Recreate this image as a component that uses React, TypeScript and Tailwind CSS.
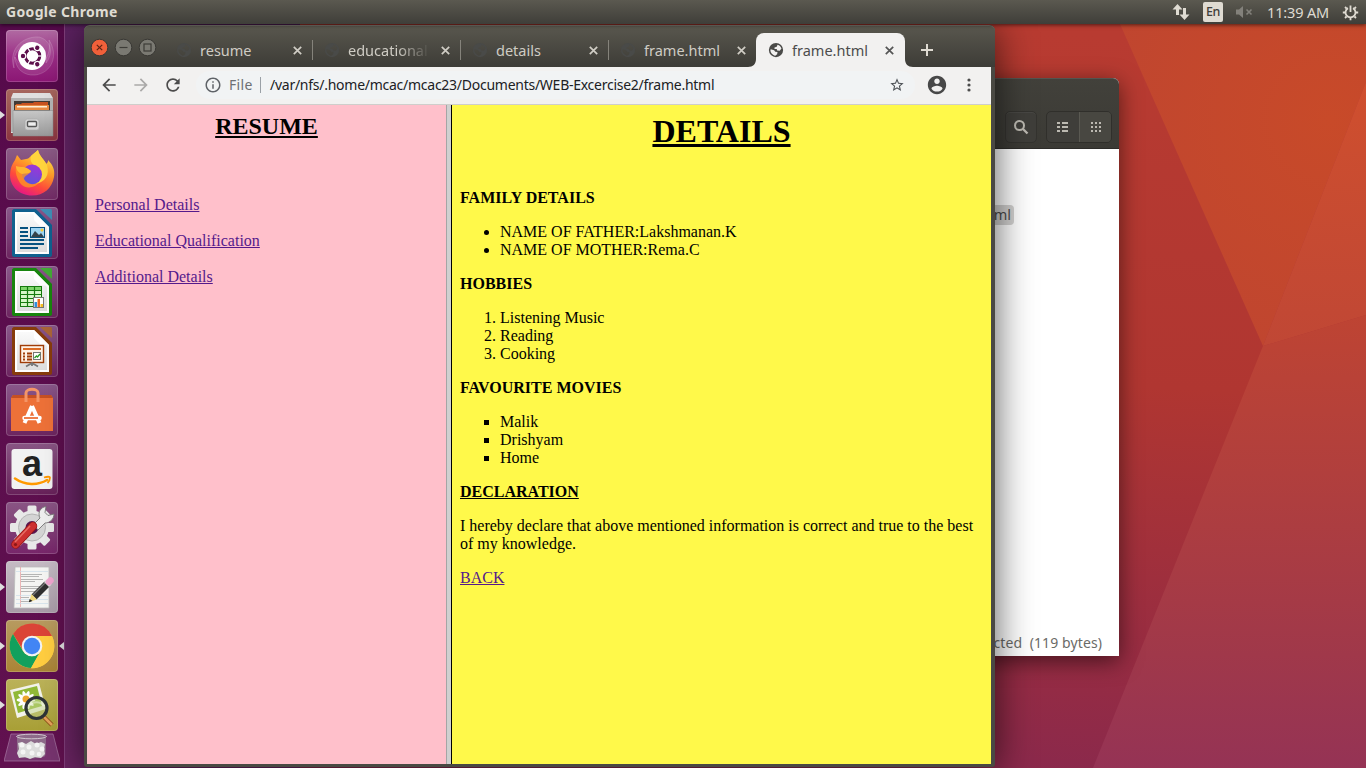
import React from "react";

const UI = "font-['Noto_Sans','Open_Sans',sans-serif]";

function Wallpaper() {
  return (
    <svg className="absolute inset-0" width="1366" height="768" viewBox="0 0 1366 768">
      <defs>
        <linearGradient id="wBase" x1="0.35" y1="0" x2="0.25" y2="1">
          <stop offset="0" stopColor="#b83b31" />
          <stop offset="0.45" stopColor="#b03631" />
          <stop offset="0.8" stopColor="#972c42" />
          <stop offset="1" stopColor="#87284f" />
        </linearGradient>
        <linearGradient id="wLeft" x1="0" y1="0" x2="0" y2="1">
          <stop offset="0" stopColor="#5b2160" />
          <stop offset="0.4" stopColor="#6c2769" />
          <stop offset="1" stopColor="#6a2462" />
        </linearGradient>
        <radialGradient id="wTop" cx="1330" cy="120" r="260" gradientUnits="userSpaceOnUse">
          <stop offset="0" stopColor="#c84a29" />
          <stop offset="1" stopColor="#bf4530" />
        </radialGradient>
        <linearGradient id="wRight" x1="0" y1="0" x2="0" y2="1">
          <stop offset="0" stopColor="#cf4f2e" />
          <stop offset="1" stopColor="#c04735" />
        </linearGradient>
        <linearGradient id="wLow" x1="0" y1="315" x2="0" y2="768" gradientUnits="userSpaceOnUse">
          <stop offset="0" stopColor="#be4433" />
          <stop offset="0.35" stopColor="#b13f3d" />
          <stop offset="0.75" stopColor="#a0384a" />
          <stop offset="1" stopColor="#953355" />
        </linearGradient>
      </defs>
      <rect width="1366" height="768" fill="url(#wBase)" />
      <rect width="300" height="768" fill="url(#wLeft)" />
      <polygon points="1120,24 1366,24 1366,82 1263,346" fill="url(#wTop)" />
      <polygon points="1366,82 1366,315 1263,346" fill="url(#wRight)" />
      <polygon points="1263,346 1366,315 1366,768 1093,768" fill="url(#wLow)" />
    </svg>
  );
}

function TopPanel() {
  return (
    <header className={`relative z-30 flex h-6 w-full items-center justify-between bg-linear-to-b from-[#5b5950] to-[#3f3e39] pr-[7px] pl-1.5 text-[#dfdbd2] shadow-[0_1px_4px_rgba(0,0,0,0.6)] ${UI}`}>
      <span className="text-[14px] leading-6 font-bold tracking-[0.33px] whitespace-nowrap">Google Chrome</span>
      <div className="flex items-center">
        <svg width="18" height="16" viewBox="0 0 18 16" fill="#dfdbd2">
          <path d="M5.500 0 10.500 5.500H7V11H4V5.500H.5zM12.500 16 7.500 10.500H11V4h3v6.500h3.500z" />
        </svg>
        <span className="ml-[13px] flex h-5 w-5 items-center justify-center rounded-[2px] bg-[#dfdbd2] text-[12.5px] leading-5 font-medium tracking-[-0.5px] text-[#3f3e39]">En</span>
        <svg className="ml-3" width="18" height="14" viewBox="0 0 18 14">
          <path d="M1 4.500h3L8 1v12L4 9.500H1z" fill="#83817b" />
          <path d="m11.500 4.500 5 5m0-5-5 5" stroke="#83817b" strokeWidth="1.600" />
        </svg>
        <span className="ml-3.5 w-[75px] text-[14.5px] leading-6 tracking-[-0.15px] whitespace-nowrap">11:39 AM</span>
        <svg width="17" height="17" viewBox="0 0 17 17" fill="none" stroke="#dfdbd2">
          <path d="M6 4.100a5 5 0 1 0 5 0" strokeWidth="1.800" />
          <path d="M8.500 1.500v6.500" strokeWidth="1.800" />
          <path d="M3 3l1.700 1.700M14 3l-1.700 1.700M.8 8.500H3M14 8.500h2.200M3 14l1.500-1.500M14 14l-1.500-1.500M8.500 14v2.200" strokeWidth="1.800" />
        </svg>
      </div>
    </header>
  );
}

function UbuntuIcon() {
  return (
    <g>
      <g fill="#fff" fillOpacity="0.1" stroke="#fff" strokeOpacity="0.2" strokeWidth="0.800">
        <path d="M8 38C2 20 16 6 33 7c12 3 15 16 7 26 2-14-8-22-19-19C10 17 7 28 8 38z" />
        <path d="M43 10c10 15 3 33-14 35-12 1-20-7-20-18 5 10 14 14 23 9s13-15 11-26z" />
      </g>
      <circle cx="26" cy="26" r="14" fill="#fff" />
      <circle cx="26.500" cy="26" r="7.300" fill="none" stroke="#5d0f4c" strokeWidth="3" />
      {[0, 120, 240].map((a) => (
        <path key={a} d="M31 26h6" stroke="#fff" strokeWidth="1.200" transform={`rotate(${a} 26.500 26)`} />
      ))}
      {[180, 60, -60].map((a) => (
        <g key={a} transform={`rotate(${a} 26.500 26)`}>
          <circle cx="36" cy="26" r="2.800" fill="#5d0f4c" stroke="#fff" strokeWidth="1.200" />
        </g>
      ))}
    </g>
  );
}

function FilesIcon() {
  return (
    <g>
      <path d="M7 4h37l3 5v35H5V9z" fill="#e0e0e0" />
      <path d="M5 9h42v34H5z" fill="#b4b4b4" />
      <path d="M8 12h36v10H8z" fill="#423a35" />
      <path d="M10 15h5l1-1h11l1-1h14v3H10z" fill="#c85220" />
      <path d="M9 16h34v5H9z" fill="#e98b43" />
      <path d="M11 17h30v1.500H11z" fill="#fff0d8" />
      <path d="M7 21.500h40V47H7z" fill="url(#grey)" stroke="#888" strokeWidth="0.500" />
      <rect x="19" y="30" width="14" height="11" rx="2.500" fill="#d2d2d2" stroke="#aaa" strokeWidth="0.600" />
      <rect x="21.500" y="32.500" width="9" height="5" rx="1" fill="#eee" stroke="#555" strokeWidth="1.400" />
    </g>
  );
}

function FirefoxIcon() {
  return (
    <g>
      <path d="M25 8c2-2 5-4 7-6 1 6 6 9 8 14 2-1 2-3 2-4 5 5 7 10 6 17-2 11-10 18.500-22 18.500C13 47.500 4 38 4 27c0-6 2-11 5-15l2-5c2 2 3 4 4 5l5-1c2 0 3-1 5-3z" fill="url(#fox)" />
      <path d="M25 8c2-2 5-4 7-6 1 6 7 10 9 15 3 10-2 17-11 19 8-9 3-16-1-18-4-3-5-6-4-10z" fill="#ffd43d" />
      <circle cx="26" cy="26.500" r="10" fill="url(#foxIn)" />
      <path d="M10 19c5 2 8-1 15 4 0 3-7 4-7 8 3 5 9 7 15 3-3 6-14 8-19 1-3-5-5-10-4-16z" fill="#ff9a20" fillOpacity="0.750" />
      <path d="M10 18c5 2 9-1 15 5-1 3-5 2-9 3-3-1-6-4-6-8z" fill="#ffb630" />
    </g>
  );
}

function DocBase({ color, fold }: { color: string; fold: string }) {
  return (
    <g>
      <path d="M8 2h22l16 16v30c0 1-1 2-2 2H8c-1 0-2-1-2-2V4c0-1 1-2 2-2z" fill={color} />
      <path d="M34 2h10c1.500 0 2 .5 2 2v9z" fill={fold} />
      <path d="M9 5h19l15 15v27H9z" fill="#fff" />
      <path d="M11 7h16l14 14v24H11z" fill="url(#paper)" />
      <path d="M28 5v8l6 6 9 1z" fill="#fff" />
    </g>
  );
}

function WriterIcon() {
  return (
    <g>
      <DocBase color="#10618f" fold="#408eb5" />
      <path d="M14 21h8M14 25h8M14 29h8M14 33h24M14 37h24M14 41h18" stroke="#075280" strokeWidth="2" />
      <rect x="24.500" y="20.500" width="14" height="10" fill="#9fd5f3" stroke="#075280" />
      <path d="m25 30 4-6 4 4 2-2 3 4z" fill="#35424b" />
      <circle cx="36" cy="23" r="1.500" fill="#f8c934" />
    </g>
  );
}

function CalcIcon() {
  return (
    <g>
      <DocBase color="#18850e" fold="#43aa36" />
      <rect x="14.500" y="20.500" width="21" height="20" fill="#d7f7c8" stroke="#167a0e" />
      <path d="M15 21h20v3H15z" fill="#7fd66b" />
      <path d="M14 24.500h22M14 28.500h22M14 32.500h22M14 36.500h22M21.500 20v21M28.500 20v21" stroke="#167a0e" strokeWidth="1.200" />
      <rect x="27.500" y="31.500" width="10" height="10" fill="#fff" stroke="#777" />
      <path d="M28.500 36h2.500v5h-2.500z" fill="#2f8fdd" />
      <path d="M31.500 33H34v8h-2.500z" fill="#f06a1c" />
      <path d="M34.500 38H37v3h-2.500z" fill="#f5bd23" />
    </g>
  );
}

function ImpressIcon() {
  return (
    <g>
      <DocBase color="#873c0c" fold="#aa6538" />
      <rect x="14.500" y="20.500" width="23" height="17" fill="#fff2e5" stroke="#a03d08" strokeWidth="1.400" />
      <path d="M17 24h18" stroke="#db6b25" strokeWidth="2" />
      <path d="M17 28.500h2M17 31.500h2M17 34.500h2M21 28.500h5M21 31.500h5M21 34.500h5" stroke="#a03d08" strokeWidth="1.800" />
      <rect x="27.500" y="27.500" width="7" height="7" fill="#fff" stroke="#777" />
      <path d="m28.500 33 2-2 1 1 2.500-3" stroke="#2b9a27" fill="none" strokeWidth="1.300" />
      <path d="M20 41.500 26 38l6 3.500M26 38v3" stroke="#777" strokeWidth="1.800" fill="none" />
    </g>
  );
}

function SoftwareIcon() {
  return (
    <g>
      <path d="m7 11-2 3v33h42V14l-2-3z" fill="#ed7138" />
      <path d="m7 11-2 3h42l-2-3z" fill="#c65023" />
      <path d="M20 18V9c0-5 12-5 12 0v9" fill="none" stroke="#f49567" strokeWidth="3" />
      <path d="M26 22 18.500 39M26 22l7.500 17" stroke="#fff" strokeWidth="4" fill="none" />
      <path d="M18.500 34h15" stroke="#fff" strokeWidth="4.500" strokeLinecap="round" />
      <path d="M18 34h14" stroke="#ed7138" strokeWidth="1.800" />
    </g>
  );
}

function AmazonIcon() {
  return (
    <g>
      <rect x="5.500" y="6" width="41" height="40" rx="3" fill="#f2f2f2" />
      <text x="26" y="33" textAnchor="middle" fontFamily="Liberation Sans" fontWeight="700" fontSize="36" fill="#222">a</text>
      <path d="M9 35.500c10 7 23 7 32 1.500" fill="none" stroke="#ff9900" strokeWidth="2.600" strokeLinecap="round" />
      <path d="M38 34.500c3-1 6-1 6 0s-1 4-2.500 5.500" fill="none" stroke="#ff9900" strokeWidth="1.800" />
    </g>
  );
}

function SettingsIcon() {
  return (
    <g>
      <g fill="#e8e8e8">
        {[0, 45, 90, 135].map((a) => (
          <rect key={a} x="21.500" y="3.500" width="9" height="44" rx="1.500" transform={`rotate(${a} 26 25.500)`} />
        ))}
        <circle cx="26" cy="25.500" r="17" />
      </g>
      <circle cx="26" cy="25.500" r="13.500" fill="#d4d4d4" stroke="#b5b5b5" />
      <circle cx="26" cy="25.500" r="6.500" fill="#591650" />
      <path d="M27.500 22.500 34 16c-2-4-1-9 4-11l2-.5-1 6 3 3 6-1.500c0 5-4 9-9 9l-7 7z" fill="#eee" stroke="#777" strokeWidth="0.900" strokeLinejoin="round" />
      <path d="M9.500 42.500 27 24" stroke="#951515" strokeWidth="8.500" strokeLinecap="round" />
      <path d="M9.500 42.500 27 24" stroke="#cd3030" strokeWidth="7" strokeLinecap="round" />
      <path d="M9 40 24 24" stroke="#e76d65" strokeWidth="1.500" />
      <circle cx="9.500" cy="42.500" r="1.600" fill="#8c1717" />
    </g>
  );
}

function EditorIcon() {
  return (
    <g>
      <path d="M9 6h34v41H8z" fill="#f5f5f3" stroke="#bbb" strokeWidth="0.800" />
      <path d="M14.500 6v40" stroke="#e9a4a4" strokeWidth="0.800" />
      <path d="M10 10.500h32M10 34.500h32M10 38.500h32M10 42.500h32" stroke="#ccdce8" strokeWidth="0.700" />
      <path d="M15 13.500h21M15 15.500h18M15 18.500h22M15 20.500h14M15 25.500h20M15 27.500h18M15 30.500h16M15 36.500h8M15 40.500h10" stroke="#8a8a8a" strokeWidth="0.600" />
      <path d="m28 36 13-13" stroke="#303030" strokeWidth="7" />
      <path d="m27 34 13-13" stroke="#777" strokeWidth="1.300" />
      <path d="m40.500 23.500 2.500-2.500" stroke="#ddd" strokeWidth="7" />
      <path d="m43 21 1.500-1.500" stroke="#f1a5cf" strokeWidth="6.500" strokeLinecap="round" />
      <path d="m25.500 33-2.500 8 8-2.500z" fill="#eed77d" />
      <path d="m23.700 38-.8 3.300 3.600-1.300z" fill="#222" />
    </g>
  );
}

function ChromeIcon() {
  return (
    <g>
      <circle cx="26" cy="26" r="22.300" fill="#ffcd40" />
      <path d="M26 16h20A22.300 22.300 0 0 0 7 14l10.500 17z" fill="#db4437" />
      <path d="M7 14a22.300 22.300 0 0 0 18 34l9.500-17a10 10 0 0 1-17.500 0z" fill="#12a05d" />
      <path d="M26 16h20A22.300 22.300 0 0 1 25 48.200l9.600-17A10 10 0 0 0 26 16z" fill="#ffcd40" />
      <circle cx="26" cy="26" r="10.300" fill="#f3f3f3" />
      <circle cx="26" cy="26" r="8.200" fill="#4285f4" />
    </g>
  );
}

function ViewerIcon() {
  return (
    <g>
      <path d="m4 11 29-7 7 26-29 9z" fill="#f2f2eb" />
      <path d="m7 13 24-6 5 20-24 7z" fill="#90b936" />
      <g fill="#fff">
        {[0, 36, 72, 108, 144].map((a) => (
          <ellipse key={a} cx="20" cy="21" rx="9.500" ry="2.300" transform={`rotate(${a} 20 21)`} />
        ))}
      </g>
      <circle cx="20" cy="20" r="3.500" fill="#eda62c" />
      <path d="m38 38 8 8" stroke="#8c4e17" strokeWidth="4.500" />
      <path d="m38 38 8 8" stroke="#e3a259" strokeWidth="2.700" />
      <circle cx="30.500" cy="29" r="10.500" fill="#c4d690" fillOpacity="0.500" stroke="#2e3436" strokeWidth="3.200" />
      <path d="M23 27c4-5 11-5 15 0" stroke="#fff" strokeOpacity="0.400" fill="none" strokeWidth="2" />
    </g>
  );
}

type Item = { id: string; icon: React.ReactNode; tile: string; left?: boolean; right?: boolean };

const ITEMS: Item[] = [
  { id: "dash", icon: <UbuntuIcon />, tile: "bg-linear-to-b from-[#b06aa2] via-[#9c2d87] to-[#8b1674]" },
  { id: "files", icon: <FilesIcon />, tile: "bg-linear-to-b from-[#a6675e] to-[#8b3440]", left: true },
  { id: "firefox", icon: <FirefoxIcon />, tile: "bg-linear-to-b from-[#8b5c86] to-[#732b66]" },
  { id: "writer", icon: <WriterIcon />, tile: "bg-linear-to-b from-[#89588a] to-[#6c245f]" },
  { id: "calc", icon: <CalcIcon />, tile: "bg-linear-to-b from-[#89588a] to-[#6c245f]" },
  { id: "impress", icon: <ImpressIcon />, tile: "bg-linear-to-b from-[#89588a] to-[#6c245f]" },
  { id: "software", icon: <SoftwareIcon />, tile: "bg-linear-to-b from-[#89588a] to-[#6c245f]" },
  { id: "amazon", icon: <AmazonIcon />, tile: "bg-linear-to-b from-[#895584] to-[#672059]" },
  { id: "settings", icon: <SettingsIcon />, tile: "bg-linear-to-b from-[#895584] to-[#77256a]" },
  { id: "editor", icon: <EditorIcon />, tile: "bg-linear-to-b from-[#c5bbc4] to-[#a89ba7]", left: true },
  { id: "chrome", icon: <ChromeIcon />, tile: "bg-linear-to-b from-[#b79a60] to-[#aa8435]", left: true, right: true },
  { id: "viewer", icon: <ViewerIcon />, tile: "bg-linear-to-b from-[#bbb259] to-[#a89f35]", left: true },
];

function Launcher() {
  return (
    <nav className="relative flex h-[744px] w-[65px] shrink-0 flex-col gap-[7px] border-r border-[#803f7b] bg-linear-to-b from-[#560a4b] to-[#61114f] pt-1.5">
      <svg className="absolute" width="0" height="0">
        <defs>
          <linearGradient id="grey" x1="0" y1="0" x2="0" y2="1">
            <stop offset="0" stopColor="#c7c7c7" />
            <stop offset="1" stopColor="#999" />
          </linearGradient>
          <linearGradient id="paper" x1="0" y1="0" x2="0" y2="1">
            <stop offset="0" stopColor="#fafafa" />
            <stop offset="1" stopColor="#dedede" />
          </linearGradient>
          <linearGradient id="fox" x1="0.800" y1="0" x2="0.300" y2="1">
            <stop offset="0" stopColor="#fff44f" />
            <stop offset="0.400" stopColor="#ff9b28" />
            <stop offset="0.700" stopColor="#ff4b3b" />
            <stop offset="1" stopColor="#e31587" />
          </linearGradient>
          <linearGradient id="foxIn" x1="0.700" y1="0" x2="0.300" y2="1">
            <stop offset="0" stopColor="#a034d8" />
            <stop offset="1" stopColor="#5a55d8" />
          </linearGradient>
        </defs>
      </svg>
      {ITEMS.map((it) => (
        <div key={it.id} className="flex h-[52px] w-16 shrink-0 items-center">
          <svg className="mr-px shrink-0" width="5" height="8" viewBox="0 0 5 8">
            {it.left && <path d="M0 0 5 4 0 8z" fill="#dedede" />}
          </svg>
          <div className={`h-[52px] w-[52px] shrink-0 rounded-[4px] shadow-[inset_0_0_0_1px_rgba(255,255,255,0.18)] ${it.tile}`}>
            <svg className="overflow-visible" width="52" height="52" viewBox="0 0 52 52">{it.icon}</svg>
          </div>
          <svg className="ml-px shrink-0" width="5" height="8" viewBox="0 0 5 8">
            {it.right && <path d="M5 0 0 4 5 8z" fill="#dedede" />}
          </svg>
        </div>
      ))}
      <svg className="-mt-[6px] ml-1 shrink-0" width="56" height="31" viewBox="0 0 56 31">
        <path d="M7 2h42l7 27H0z" fill="#7d3d77" fillOpacity="0.800" stroke="#a878a4" strokeWidth="0.700" />
        <path d="M13 6c0 9 0 15 1 18 3 3 24 3 27 0 1-3 1-9 1-18z" fill="#8d6b8a" />
        <path d="m14 11 4-1 4 2 5-3 5 3 5-2 4 2-1 5 1 5-4 4-6-1-5 2-5-2-6 1-2-5 2-4z" fill="#dcdcdc" />
        <g fill="#f4f4f4">
          <circle cx="18" cy="13" r="2.500" /><circle cx="25" cy="15" r="2.500" /><circle cx="33" cy="13" r="2.500" />
          <circle cx="38" cy="17" r="2.500" /><circle cx="19" cy="20" r="2.500" /><circle cx="28" cy="21" r="2.500" /><circle cx="35" cy="22" r="2.200" />
        </g>
        <ellipse cx="27.500" cy="4.500" rx="15" ry="2.300" fill="#8d6b8a" stroke="#d0c6cf" />
      </svg>
    </nav>
  );
}

function FileManager() {
  return (
    <section className={`absolute top-[78px] left-[940px] z-10 flex h-[578px] w-[179px] flex-col rounded-t-[6px] bg-white shadow-[0_5px_22px_rgba(0,0,0,0.55)] ${UI}`}>
      <div className="flex h-[71px] items-end justify-end gap-[9px] rounded-t-[6px] border-b border-[#2d2c29] bg-linear-to-b from-[#42413b] to-[#3b3a35] pr-[7px] pb-[5px] shadow-[inset_0_1px_0_rgba(255,255,255,0.1)]">
        <div className="flex h-8 w-8 items-center justify-center rounded-[5px] border border-[#34332f] bg-[#3f3e3a] shadow-[inset_0_1px_0_rgba(255,255,255,0.05)]">
          <svg width="16" height="16" viewBox="0 0 16 16" fill="none" stroke="#bcb9b1">
            <circle cx="6.500" cy="6.500" r="4.500" strokeWidth="2" />
            <path d="m10 10 4.500 4.500" strokeWidth="2.300" />
          </svg>
        </div>
        <div className="flex h-8 w-[66px] overflow-hidden rounded-[5px] border border-[#302f2b] bg-[#3f3e3a]">
          <div className="flex w-8 items-center justify-center">
            <svg width="12" height="10" viewBox="0 0 12 10" fill="#bcb9b1">
              <path d="M0 0h3v2H0zM5 0h6v2H5zM0 4h3v2H0zM5 4h6v2H5zM0 8h3v2H0zM5 8h6v2H5z" />
            </svg>
          </div>
          <div className="flex flex-1 items-center justify-center border-l border-[#5a5952] bg-[#484741]">
            <svg width="10" height="10" viewBox="0 0 10 10" fill="#bcb9b1">
              <path d="M0 0h2v2H0zM4 0h2v2H4zM8 0h2v2H8zM0 4h2v2H0zM4 4h2v2H4zM8 4h2v2H8zM0 8h2v2H0zM4 8h2v2H4zM8 8h2v2H8z" />
            </svg>
          </div>
        </div>
      </div>
      <div className="flex flex-1 flex-col items-end justify-between pt-14">
        <span className="mr-[105px] flex h-5 w-10 items-center justify-end rounded-[4px] bg-[#d3d2d1] pr-[3px] pb-0.5 text-[14.5px] leading-[18px] text-[#4c4c4c]">ml</span>
        <span className="mr-[17px] mb-[3px] text-[14px] leading-5 tracking-[0.1px] whitespace-pre text-[#6b6b68]">cted  (119 bytes)</span>
      </div>
    </section>
  );
}

function Globe({ color }: { color: string }) {
  return (
    <svg width="18" height="18" viewBox="0 0 24 24" fill={color}>
      <path d="M12 2.500A9.500 9.500 0 1 0 12 21.500 9.500 9.500 0 0 0 12 2.500zM5 11l4.500 1.200 1.500 2 3 .3-.5 3-2.500 2-.5 0c-3.500-.8-6-4-6-7.500zM14 5c2.500.7 4.500 2.500 5.300 5L17 13l-3.500-.5-.5-2-3 0 0-2 3-.8z" fillRule="evenodd" />
    </svg>
  );
}

function CloseX({ color }: { color: string }) {
  return (
    <svg width="9" height="9" viewBox="0 0 9 9" stroke={color} strokeWidth="1.700">
      <path d="m.8.8 7.400 7.400M8.200.8.8 8.200" />
    </svg>
  );
}

function Tab({ title, active, fade, line }: { title: string; active?: boolean; fade?: boolean; line?: boolean }) {
  return (
    <div className={`relative flex h-[34px] shrink-0 items-center ${active ? "-ml-px w-[149px] rounded-t-[8px] bg-[#f2f1f0] pl-[11px] text-[#4c4c4c]" : "w-[148px] pl-2.5 text-[#cfccc4]"}`}>
      {active && (
        <>
          <svg className="absolute bottom-0 -left-2" width="8" height="8" viewBox="0 0 8 8"><path d="M8 0v8H0c5 0 8-3 8-8z" fill="#f2f1f0" /></svg>
          <svg className="absolute -right-2 bottom-0" width="8" height="8" viewBox="0 0 8 8"><path d="M0 0v8h8C3 8 0 5 0 0z" fill="#f2f1f0" /></svg>
        </>
      )}
      <Globe color={active ? "#4a4a48" : "#494a48"} />
      <span className={`ml-[7px] w-[82px] overflow-hidden pb-px text-[14.5px] leading-5 whitespace-nowrap ${fade ? "mask-r-from-60%" : ""}`}>{title}</span>
      <span className="ml-[10.5px] flex"><CloseX color={active ? "#555" : "#d0cdc5"} /></span>
      {line && <span className="ml-auto h-5 w-px bg-[#85837b]" />}
    </div>
  );
}

function TitleStrip() {
  return (
    <div className="flex h-[42px] items-end rounded-t-[6px] border-t border-[#76746b] bg-linear-to-b from-[#59574e] to-[#3d3c37] pl-[3px]">
      <div className="flex h-[29px] w-[81px] shrink-0 items-start gap-[5px] pl-[2.5px]">
        <svg width="19" height="19" viewBox="0 0 19 19">
          <circle cx="9.500" cy="9.500" r="8.300" fill="#f0603a" stroke="#393834" strokeWidth="1" />
          <path d="m6.800 6.800 5.400 5.400m0-5.400-5.400 5.400" stroke="#5c2414" strokeWidth="1.200" />
        </svg>
        <svg width="19" height="19" viewBox="0 0 19 19">
          <circle cx="9.500" cy="9.500" r="8.300" fill="#7a7972" stroke="#393834" strokeWidth="1" />
          <path d="M5.500 9.500h8" stroke="#3d3c38" strokeWidth="1.200" />
        </svg>
        <svg width="19" height="19" viewBox="0 0 19 19">
          <circle cx="9.500" cy="9.500" r="8.300" fill="#7a7972" stroke="#393834" strokeWidth="1" />
          <rect x="6" y="6" width="7" height="7" fill="none" stroke="#3d3c38" strokeWidth="1.200" />
        </svg>
      </div>
      <div className="-ml-[3px] flex items-end">
        <Tab title="resume" line />
        <Tab title="educational" fade line />
        <Tab title="details" line />
        <Tab title="frame.html" />
        <Tab title="frame.html" active />
      </div>
      <svg className="mb-[11px] ml-4" width="12" height="12" viewBox="0 0 12 12" stroke="#dfdbd2" strokeWidth="2">
        <path d="M6 0v12M0 6h12" />
      </svg>
    </div>
  );
}

function Toolbar() {
  return (
    <div className="flex h-[38px] items-center border-b border-[#cfcecb] bg-[#f2f1f0] pb-px">
      <div className="flex w-[109px] items-center gap-3 pl-3">
        <svg width="20" height="20" viewBox="0 0 24 24" fill="#4c4c4c"><path d="M20 11H7.830l5.590-5.590L12 4l-8 8 8 8 1.410-1.410L7.830 13H20v-2z" /></svg>
        <svg width="20" height="20" viewBox="0 0 24 24" fill="#aaa9a8"><path d="m12 4-1.410 1.410L16.170 11H4v2h12.170l-5.580 5.590L12 20l8-8z" /></svg>
        <svg width="20" height="20" viewBox="0 0 24 24" fill="#4c4c4c"><path d="M17.650 6.350C16.200 4.900 14.210 4 12 4c-4.420 0-7.990 3.580-7.990 8s3.570 8 7.990 8c3.730 0 6.840-2.550 7.730-6h-2.080c-.82 2.330-3.040 4-5.650 4-3.310 0-6-2.690-6-6s2.690-6 6-6c1.660 0 3.140.69 4.220 1.780L13 11h7V4l-2.350 2.350z" /></svg>
      </div>
      <div className="flex h-7 w-[719px] items-center rounded-full bg-[#f1f3f4] pl-2">
        <svg width="18" height="18" viewBox="0 0 24 24" fill="#5f6368"><path d="M11 7h2v2h-2zm0 4h2v6h-2zm1-9C6.480 2 2 6.480 2 12s4.480 10 10 10 10-4.480 10-10S17.520 2 12 2zm0 18c-4.410 0-8-3.590-8-8s3.590-8 8-8 8 3.590 8 8-3.590 8-8 8z" /></svg>
        <span className="ml-[7px] w-[31px] text-[14px] leading-5 tracking-[0.3px] text-[#6d7073]">File</span>
        <span className="h-4 w-px bg-[#9aa0a6]" />
        <span className="ml-[9px] flex-1 text-[14px] leading-5 tracking-[-0.26px] whitespace-nowrap text-[#202124]">/var/nfs/.home/mcac/mcac23/Documents/WEB-Excercise2/frame.html</span>
        <svg className="mr-[10px]" width="16" height="16" viewBox="0 0 24 24" fill="#4c5055"><path d="m22 9.240-7.190-.62L12 2 9.190 8.630 2 9.240l5.460 4.730L5.820 21 12 17.270 18.180 21l-1.630-7.030L22 9.240zM12 15.400l-3.760 2.270 1-4.280-3.320-2.880 4.380-.38L12 6.100l1.710 4.040 4.380.38-3.320 2.880 1 4.280L12 15.400z" /></svg>
      </div>
      <svg className="ml-[11px]" width="22" height="22" viewBox="0 0 24 24" fill="#484848"><path d="M12 2C6.480 2 2 6.480 2 12s4.480 10 10 10 10-4.480 10-10S17.520 2 12 2zm0 3c1.660 0 3 1.340 3 3s-1.340 3-3 3-3-1.340-3-3 1.340-3 3-3zm0 14.200c-2.500 0-4.710-1.280-6-3.220.03-1.990 4-3.080 6-3.080 1.990 0 5.970 1.090 6 3.080-1.290 1.940-3.500 3.220-6 3.220z" /></svg>
      <svg className="ml-[19px]" width="4" height="14" viewBox="0 0 4 14" fill="#4c4c4c"><circle cx="2" cy="2" r="1.600" /><circle cx="2" cy="7" r="1.600" /><circle cx="2" cy="12" r="1.600" /></svg>
    </div>
  );
}

const LINK = "text-[#551a8b] underline";

function ResumeFrame() {
  return (
    <div className="w-[359px] shrink-0 bg-[#ffc0cb] px-2 pt-2">
      <h2 className="text-center text-[24px] leading-[27px] font-bold underline">RESUME</h2>
      <div className="mt-14 flex flex-col items-start gap-[18px]">
        <a className={LINK}>Personal Details</a>
        <a className={LINK}>Educational Qualification</a>
        <a className={LINK}>Additional Details</a>
      </div>
    </div>
  );
}

function DetailsFrame() {
  return (
    <div className="flex min-w-0 flex-1 flex-col gap-4 bg-[#fff94a] px-2 pt-2">
      <h1 className="mb-[23px] text-center text-[32px] leading-[37px] font-bold underline">DETAILS</h1>
      <b>FAMILY DETAILS</b>
      <ul className="list-disc pl-10">
        <li>NAME OF FATHER:Lakshmanan.K</li>
        <li>NAME OF MOTHER:Rema.C</li>
      </ul>
      <b>HOBBIES</b>
      <ol className="list-decimal pl-10">
        <li>Listening Music</li>
        <li>Reading</li>
        <li>Cooking</li>
      </ol>
      <b>FAVOURITE MOVIES</b>
      <ul className="list-[square] pl-10">
        <li>Malik</li>
        <li>Drishyam</li>
        <li>Home</li>
      </ul>
      <b className="underline">DECLARATION</b>
      <p>I hereby declare that above mentioned information is correct and true to the best of my knowledge.</p>
      <a className={`self-start ${LINK}`}>BACK</a>
    </div>
  );
}

function Browser() {
  return (
    <section className={`absolute top-[25px] left-[84px] z-20 flex h-[742px] w-[911px] flex-col rounded-t-[6px] rounded-b-[3px] bg-[#4a4943] pr-1 pb-[3px] pl-[3px] shadow-[0_4px_38px_rgba(0,0,0,0.65)] ${UI}`}>
      <div className="-mr-1 -ml-[3px] rounded-t-[6px] bg-[#3d3c37]">
        <TitleStrip />
      </div>
      <Toolbar />
      <div className="flex min-h-0 flex-1 font-['Liberation_Serif',serif] text-[16px] leading-[18px] text-black">
        <ResumeFrame />
        <div className="w-[6px] shrink-0 border-r border-l border-r-black border-l-[#a5a5a5] bg-[#d0d0d0]" />
        <DetailsFrame />
      </div>
    </section>
  );
}

export default function App() {
  return (
    <main className="relative h-[768px] w-[1366px] overflow-hidden">
      <Wallpaper />
      <TopPanel />
      <Launcher />
      <FileManager />
      <Browser />
    </main>
  );
}
